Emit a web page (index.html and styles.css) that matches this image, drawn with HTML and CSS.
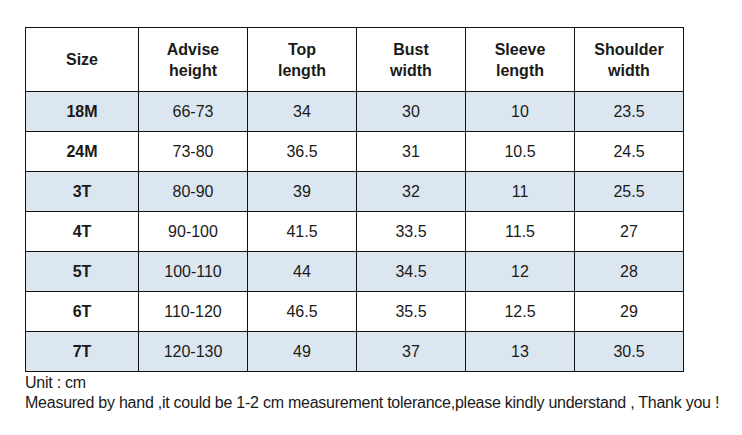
FILE: index.html
```html
<!DOCTYPE html>
<html>
<head>
<meta charset="utf-8">
<link rel="stylesheet" href="styles.css">
</head>
<body>
<div class="page">
<table class="sizes">
<colgroup>
<col class="c1"><col class="c"><col class="c"><col class="c"><col class="c"><col class="c">
</colgroup>
<thead>
<tr class="head"><th>Size</th><th>Advise<br>height</th><th>Top<br>length</th><th>Bust<br>width</th><th>Sleeve<br>length</th><th>Shoulder<br>width</th></tr>
</thead>
<tbody>
<tr class="alt"><th>18M</th><td>66-73</td><td>34</td><td>30</td><td>10</td><td>23.5</td></tr>
<tr><th>24M</th><td>73-80</td><td>36.5</td><td>31</td><td>10.5</td><td>24.5</td></tr>
<tr class="alt"><th>3T</th><td>80-90</td><td>39</td><td>32</td><td>11</td><td>25.5</td></tr>
<tr><th>4T</th><td>90-100</td><td>41.5</td><td>33.5</td><td>11.5</td><td>27</td></tr>
<tr class="alt"><th>5T</th><td>100-110</td><td>44</td><td>34.5</td><td>12</td><td>28</td></tr>
<tr><th>6T</th><td>110-120</td><td>46.5</td><td>35.5</td><td>12.5</td><td>29</td></tr>
<tr class="alt"><th>7T</th><td>120-130</td><td>49</td><td>37</td><td>13</td><td>30.5</td></tr>
</tbody>
</table>
<div class="notes">
<div>Unit : cm</div>
<div>Measured by hand ,it could be 1-2 cm measurement tolerance,please kindly understand , Thank you !</div>
</div>
</div>
</body>
</html>
```
FILE: styles.css
```css
html, body {
  margin: 0;
  padding: 0;
  background: #ffffff;
}
.page {
  padding: 27px 0 0 25px;
  font-family: "Liberation Sans", Arial, sans-serif;
  color: #1a1a1a;
}
.sizes {
  border-collapse: collapse;
  table-layout: fixed;
  width: 659px;
  font-size: 16px;
}
.sizes .c1 { width: 113px; }
.sizes .c { width: 109px; }
.sizes th, .sizes td {
  border: 1px solid #111;
  text-align: center;
  vertical-align: middle;
  padding: 0;
  height: 39px;
  line-height: 20px;
}
.sizes th { font-weight: bold; }
.sizes td { font-weight: normal; }
.sizes .head th { height: 63px; line-height: 21px; }
.sizes .alt th, .sizes .alt td { background: #dce6f1; }
.notes {
  font-size: 16px;
  line-height: 20px;
  padding-top: 1px;
  letter-spacing: -0.25px;
}
```
